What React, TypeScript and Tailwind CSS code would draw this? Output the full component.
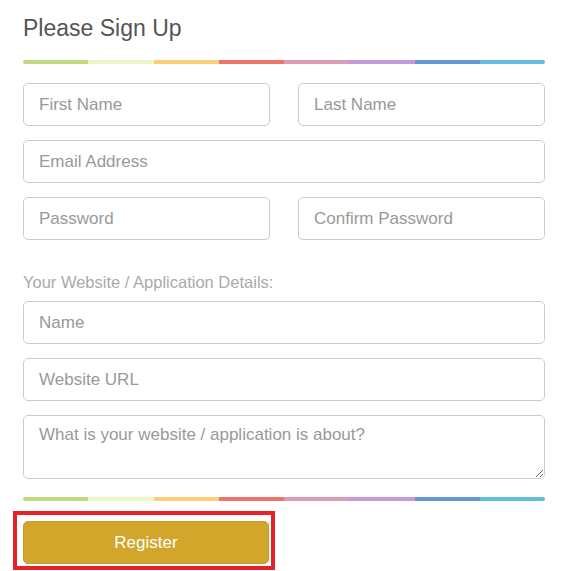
import React from 'react'

const STRIPE = ['#c1d97a', '#eef6c6', '#fbcf77', '#ee7468', '#dc9bb6', '#c29bd8', '#6596d9', '#62bfe0']

function Stripe() {
  return (
    <div className="flex h-[4px] w-full overflow-hidden rounded-full">
      {STRIPE.map((c) => (
        <div key={c} className="flex-1" style={{ backgroundColor: c }} />
      ))}
    </div>
  )
}

const inputCls =
  'h-[43px] w-full rounded-[5px] border border-[#cccccc] bg-white px-[15px] text-[17px] text-[#555] placeholder:text-[#999] outline-none'

export default function App() {
  return (
    <div className="min-h-[571px] w-[573px] bg-white font-['Liberation_Sans',Arial,sans-serif]">
      <div className="ml-[23px] flex w-[522px] flex-col">
        <h1 className="pt-[14px] text-[23px] leading-[28px] text-[#555]">Please Sign Up</h1>
        <div className="mt-[18px]">
          <Stripe />
        </div>

        <div className="mt-[19px] flex flex-col gap-[14px]">
          <div className="flex gap-[28px]">
            <input className={inputCls} placeholder="First Name" />
            <input className={inputCls} placeholder="Last Name" />
          </div>
          <input className={inputCls} placeholder="Email Address" />
          <div className="flex gap-[28px]">
            <input className={inputCls} type="password" placeholder="Password" />
            <input className={inputCls} type="password" placeholder="Confirm Password" />
          </div>
        </div>

        <p className="mt-[32px] text-[16.5px] leading-[20px] text-[#aaa]">Your Website / Application Details:</p>

        <div className="mt-[9px] flex flex-col gap-[14px]">
          <input className={inputCls} placeholder="Name" />
          <input className={inputCls} placeholder="Website URL" />
          <textarea
            className="block h-[64px] w-full rounded-[5px] border border-[#cccccc] bg-white px-[15px] py-[8px] text-[17px] leading-[22px] text-[#555] placeholder:text-[#999] outline-none"
            placeholder="What is your website / application is about?"
          />
        </div>

        <div className="mt-[18px]">
          <Stripe />
        </div>

        <div className="-ml-[10px] mt-[10px] w-[262px] border-[4px] border-[#e8202a] pb-[2px] pl-[6px] pr-[2px] pt-[6px]">
          <button className="h-[43px] w-full rounded-[5px] border border-[#c49a28] bg-[#d2a52b] text-[17px] text-white">
            Register
          </button>
        </div>
      </div>
    </div>
  )
}
